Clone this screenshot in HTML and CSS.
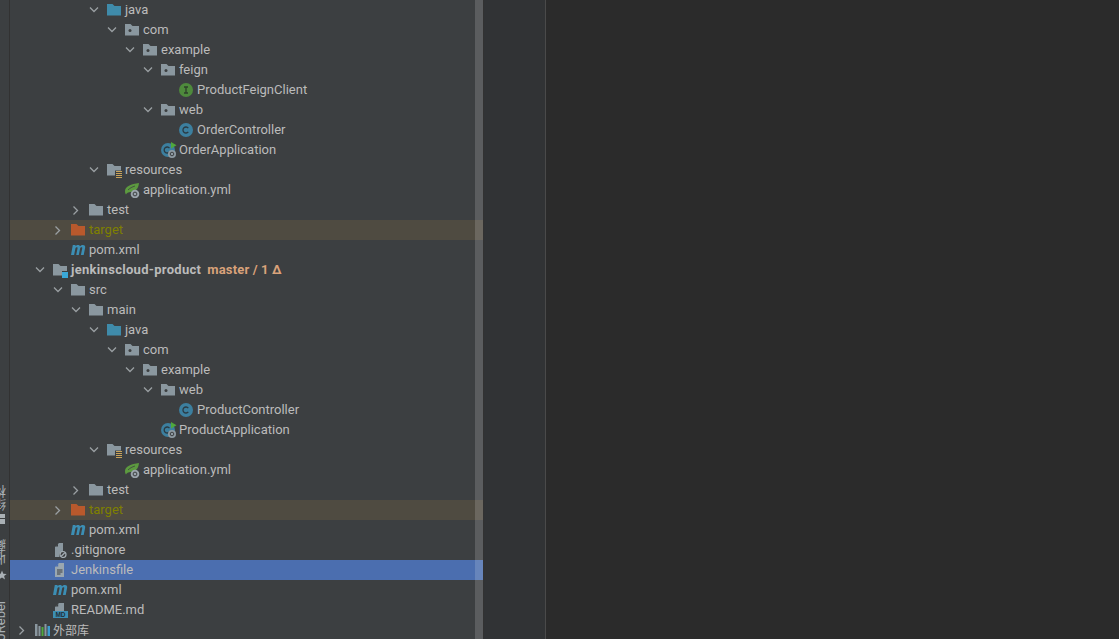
FILE: index.html
```html
<!DOCTYPE html>
<html lang="zh-CN">
<head>
    <meta charset="UTF-8">
    <meta name="viewport" content="width=device-width, initial-scale=1.0">
    <title>项目</title>
    <link rel="stylesheet" href="styles.css">
</head>
<body>
    <svg class="sprites" width="0" height="0" aria-hidden="true">
        <symbol id="i-arrow-down" viewBox="0 0 16 16"><path d="M5 5.500 9 9.500 13 5.500" fill="none" stroke="#9a9fa3" stroke-width="1.300"/></symbol>
        <symbol id="i-arrow-right" viewBox="0 0 16 16"><path d="M6.500 4.500 10.500 8.500 6.500 12.500" fill="none" stroke="#9a9fa3" stroke-width="1.300"/></symbol>
        <symbol id="i-folder" viewBox="0 0 16 16"><path d="M0 2h5.500L7.500 4H14v9.500H0z" fill="#8a979f"/></symbol>
        <symbol id="i-src" viewBox="0 0 16 16"><path d="M0 2h5.500L7.500 4H14v9.500H0z" fill="#3f8baa"/></symbol>
        <symbol id="i-target" viewBox="0 0 16 16"><path d="M0 2h5.500L7.500 4H14v9.500H0z" fill="#b9592c"/></symbol>
        <symbol id="i-package" viewBox="0 0 16 16"><path d="M0 2h5.500L7.500 4H14v9.500H0z" fill="#8a979f"/><circle cx="5" cy="8.500" r="1.500" fill="#3c3f41"/></symbol>
        <symbol id="i-resources" viewBox="0 0 16 16"><path d="M0 2h5.500L7.500 4H14v4.500H8v5H0z" fill="#8a979f"/><path d="M9 9.500h6M9 11.500h6M9 13.500h6M9 15.500h6" stroke="#c9a35a" stroke-width="1"/></symbol>
        <symbol id="i-module" viewBox="0 0 16 16"><path d="M0 2h5.500L7.500 4H14v5H9v4.500H0z" fill="#8a979f"/><rect x="9" y="10" width="6" height="6" fill="#3aa8d8"/></symbol>
        <symbol id="i-class" viewBox="0 0 16 16"><circle cx="7" cy="8" r="7" fill="#3c7f9f"/><path d="M9.300 6.100A3 3 0 1 0 9.300 9.900" fill="none" stroke="#2b3a42" stroke-width="1.300"/></symbol>
        <symbol id="i-interface" viewBox="0 0 16 16"><circle cx="7" cy="8" r="7" fill="#4e8a3c"/><path d="M5 5h4M5 11h4M7 5v6" fill="none" stroke="#2d3f2a" stroke-width="1.300"/></symbol>
        <symbol id="i-app" viewBox="0 0 16 16"><circle cx="7" cy="8" r="7" fill="#3c7f9f"/><path d="M8.500 6.100A3 3 0 1 0 8.500 9.900" fill="none" stroke="#2b3a42" stroke-width="1.300"/><path d="M10 0v6.500l5.500-3.200z" fill="#4fa83d"/><circle cx="11" cy="12" r="4" fill="#8e9aa2"/><circle cx="11" cy="12" r="1.800" fill="none" stroke="#3c3f41" stroke-width="1"/></symbol>
        <symbol id="i-yml" viewBox="0 0 16 16"><path d="M0 9C0 4.500 6 2 14 1 13.500 7 10 10 5.500 10 3.500 10 1.500 11 1 12.500 .300 11.500 0 10.500 0 9z" fill="#5c9a3f"/><path d="M3 8c2-2 4-3 7-4" fill="none" stroke="#3c3f41" stroke-width=".8"/><circle cx="10" cy="12" r="4.300" fill="#9aa4ab"/><circle cx="10" cy="12" r="1.900" fill="none" stroke="#3c3f41" stroke-width="1"/></symbol>
        <symbol id="i-maven" viewBox="0 0 16 16"><path d="M0 13 1.800 3H4.600L4.400 4.100C5.200 3.200 6.200 2.900 7 2.900 8 2.900 8.800 3.400 9 4.300 9.900 3.300 10.900 2.900 11.900 2.900 13.700 2.900 14.500 4 14.100 5.900L12.700 13H9.900L11.200 6.500C11.400 5.700 11.100 5.200 10.500 5.200 9.900 5.200 9.300 5.700 9.100 6.500L7.800 13H5.200L6.500 6.500C6.700 5.700 6.400 5.200 5.800 5.200 5.200 5.200 4.600 5.700 4.400 6.500L3.100 13z" fill="#3c8eb4"/></symbol>
        <symbol id="i-ignore" viewBox="0 0 16 16"><path d="M6 1h4v8.500A4 4 0 0 0 6.500 15H2V5z" fill="#8a979f"/><path d="M5 1.500V4.500H2.200z" fill="#3c3f41"/><circle cx="10" cy="12.500" r="3" fill="none" stroke="#a4adb3" stroke-width="1.200"/><path d="M8 14.500 12 10.500" stroke="#a4adb3" stroke-width="1.200"/></symbol>
        <symbol id="i-file" viewBox="0 0 16 16"><path d="M6 1h5v14H2V5z" fill="#9aa7b0"/><path d="M5.200 1.500V4.500H2.200z" fill="#4b6eaf"/><path d="M4 8h5.500M4 10h5.500M4 12h3.500" stroke="#3c3f41" stroke-width="1"/></symbol>
        <symbol id="i-library" viewBox="0 0 16 16"><path d="M0 2h2.500v12H0zM3.500 4h2v10h-2zM9.500 2h2v12h-2z" fill="#8a979f"/><path d="M6.500 5h2v9h-2z" fill="#4fa83d"/><path d="M12.500 4h2.500v10h-2.500z" fill="#3c9ccf"/></symbol>
        <symbol id="i-star" viewBox="0 0 10 10"><path d="M5 .500 6.300 3.700 9.700 3.900 7.100 6.100 8 9.500 5 7.600 2 9.500 2.900 6.100 .300 3.900 3.700 3.700z" fill="#a9b0b5"/></symbol>
    </svg>

    <div class="app">
        <aside class="side-strip">
            <span class="side-label side-label-structure">结构</span>
            <span class="side-mark"></span>
            <span class="side-label side-label-fav">收藏</span>
            <svg class="side-star"><use href="#i-star"/></svg>
            <span class="side-label side-label-rebel">JRebel</span>
        </aside>

        <section class="project-pane">
            <div class="tree">
                <div class="row lv-4"><svg class="arrow"><use href="#i-arrow-down"/></svg><svg class="icon"><use href="#i-src"/></svg><span class="name">java</span></div>
                <div class="row lv-5"><svg class="arrow"><use href="#i-arrow-down"/></svg><svg class="icon"><use href="#i-package"/></svg><span class="name">com</span></div>
                <div class="row lv-6"><svg class="arrow"><use href="#i-arrow-down"/></svg><svg class="icon"><use href="#i-package"/></svg><span class="name">example</span></div>
                <div class="row lv-7"><svg class="arrow"><use href="#i-arrow-down"/></svg><svg class="icon"><use href="#i-package"/></svg><span class="name">feign</span></div>
                <div class="row lv-8"><span class="arrow"></span><svg class="icon"><use href="#i-interface"/></svg><span class="name">ProductFeignClient</span></div>
                <div class="row lv-7"><svg class="arrow"><use href="#i-arrow-down"/></svg><svg class="icon"><use href="#i-package"/></svg><span class="name">web</span></div>
                <div class="row lv-8"><span class="arrow"></span><svg class="icon"><use href="#i-class"/></svg><span class="name">OrderController</span></div>
                <div class="row lv-7"><span class="arrow"></span><svg class="icon"><use href="#i-app"/></svg><span class="name">OrderApplication</span></div>
                <div class="row lv-4"><svg class="arrow"><use href="#i-arrow-down"/></svg><svg class="icon"><use href="#i-resources"/></svg><span class="name">resources</span></div>
                <div class="row lv-5"><span class="arrow"></span><svg class="icon"><use href="#i-yml"/></svg><span class="name">application.yml</span></div>
                <div class="row lv-3"><svg class="arrow"><use href="#i-arrow-right"/></svg><svg class="icon"><use href="#i-folder"/></svg><span class="name">test</span></div>
                <div class="row lv-2 excluded"><svg class="arrow"><use href="#i-arrow-right"/></svg><svg class="icon"><use href="#i-target"/></svg><span class="name">target</span></div>
                <div class="row lv-2"><span class="arrow"></span><svg class="icon"><use href="#i-maven"/></svg><span class="name">pom.xml</span></div>
                <div class="row lv-1"><svg class="arrow"><use href="#i-arrow-down"/></svg><svg class="icon"><use href="#i-module"/></svg><span class="name bold">jenkinscloud-product</span><span class="branch">master / 1 Δ</span></div>
                <div class="row lv-2"><svg class="arrow"><use href="#i-arrow-down"/></svg><svg class="icon"><use href="#i-folder"/></svg><span class="name">src</span></div>
                <div class="row lv-3"><svg class="arrow"><use href="#i-arrow-down"/></svg><svg class="icon"><use href="#i-folder"/></svg><span class="name">main</span></div>
                <div class="row lv-4"><svg class="arrow"><use href="#i-arrow-down"/></svg><svg class="icon"><use href="#i-src"/></svg><span class="name">java</span></div>
                <div class="row lv-5"><svg class="arrow"><use href="#i-arrow-down"/></svg><svg class="icon"><use href="#i-package"/></svg><span class="name">com</span></div>
                <div class="row lv-6"><svg class="arrow"><use href="#i-arrow-down"/></svg><svg class="icon"><use href="#i-package"/></svg><span class="name">example</span></div>
                <div class="row lv-7"><svg class="arrow"><use href="#i-arrow-down"/></svg><svg class="icon"><use href="#i-package"/></svg><span class="name">web</span></div>
                <div class="row lv-8"><span class="arrow"></span><svg class="icon"><use href="#i-class"/></svg><span class="name">ProductController</span></div>
                <div class="row lv-7"><span class="arrow"></span><svg class="icon"><use href="#i-app"/></svg><span class="name">ProductApplication</span></div>
                <div class="row lv-4"><svg class="arrow"><use href="#i-arrow-down"/></svg><svg class="icon"><use href="#i-resources"/></svg><span class="name">resources</span></div>
                <div class="row lv-5"><span class="arrow"></span><svg class="icon"><use href="#i-yml"/></svg><span class="name">application.yml</span></div>
                <div class="row lv-3"><svg class="arrow"><use href="#i-arrow-right"/></svg><svg class="icon"><use href="#i-folder"/></svg><span class="name">test</span></div>
                <div class="row lv-2 excluded"><svg class="arrow"><use href="#i-arrow-right"/></svg><svg class="icon"><use href="#i-target"/></svg><span class="name">target</span></div>
                <div class="row lv-2"><span class="arrow"></span><svg class="icon"><use href="#i-maven"/></svg><span class="name">pom.xml</span></div>
                <div class="row lv-1"><span class="arrow"></span><svg class="icon"><use href="#i-ignore"/></svg><span class="name">.gitignore</span></div>
                <div class="row lv-1 selected"><span class="arrow"></span><svg class="icon"><use href="#i-file"/></svg><span class="name">Jenkinsfile</span></div>
                <div class="row lv-1"><span class="arrow"></span><svg class="icon"><use href="#i-maven"/></svg><span class="name">pom.xml</span></div>
                <div class="row lv-1"><span class="arrow"></span><svg class="icon" viewBox="0 0 16 16"><path d="M6 1h5v8H2V5z" fill="#8a979f"/><path d="M5.200 1.500V4.500H2.200z" fill="#3c3f41"/><rect x="0" y="9" width="15" height="7" fill="#3c8eb4"/><text x="7.500" y="15" text-anchor="middle" class="md-text">MD</text></svg><span class="name">README.md</span></div>
                <div class="row lv-0"><svg class="arrow"><use href="#i-arrow-right"/></svg><svg class="icon"><use href="#i-library"/></svg><span class="name cjk">外部库</span></div>
            </div>
            <div class="scrollbar"></div>
        </section>

        <div class="gutter"></div>
        <main class="editor"></main>
    </div>
</body>
</html>
```

FILE: styles.css
```css
* {
    box-sizing: border-box;
}
html, body {
    margin: 0;
    height: 100%;
    overflow: hidden;
}
body {
    font-family: Roboto, "Noto Sans CJK SC", sans-serif;
    font-size: 13px;
    color: #bbbbbb;
    background-color: #2b2b2b;
}
.sprites {
    position: absolute;
}
.md-text {
    font-family: "Liberation Sans", sans-serif;
    font-size: 6.500px;
    font-weight: 700;
    fill: #22303a;
}
.app {
    display: flex;
    height: 639px;
}
.side-strip {
    flex: 0 0 10px;
    position: relative;
    overflow: hidden;
    background-color: #3c3f41;
    border-right: 1px solid #323232;
}
.side-label {
    position: absolute;
    left: -6px;
    font-size: 13px;
    line-height: 13px;
    color: #a9b0b5;
    writing-mode: vertical-rl;
    transform: rotate(180deg);
}
.side-label-structure {
    top: 485px;
}
.side-label-fav {
    top: 539px;
}
.side-label-rebel {
    top: 601px;
}
.side-mark {
    position: absolute;
    left: 0;
    top: 514px;
    width: 5px;
    height: 10px;
    background: linear-gradient(#a9b0b5 0 4px, transparent 4px 5px, #a9b0b5 5px);
}
.side-star {
    position: absolute;
    left: -3px;
    top: 570px;
    width: 10px;
    height: 10px;
}
.project-pane {
    flex: 0 0 474px;
    position: relative;
    overflow: hidden;
    background-color: #3c3f41;
    border-right: 1px solid #323232;
}
.tree {
    display: flex;
    flex-direction: column;
}
.row {
    display: flex;
    align-items: center;
    flex: 0 0 20px;
    height: 20px;
    white-space: nowrap;
}
.name {
    position: relative;
    top: -1px;
}
.cjk {
    font-size: 12px;
}
.lv-0 { padding-left: 3px; }
.lv-1 { padding-left: 21px; }
.lv-2 { padding-left: 39px; }
.lv-3 { padding-left: 57px; }
.lv-4 { padding-left: 75px; }
.lv-5 { padding-left: 93px; }
.lv-6 { padding-left: 111px; }
.lv-7 { padding-left: 129px; }
.lv-8 { padding-left: 147px; }
.arrow {
    flex: 0 0 16px;
    width: 16px;
    height: 16px;
    margin-right: 6px;
}
.icon {
    flex: 0 0 16px;
    width: 16px;
    height: 16px;
    margin-right: 2px;
}
.bold {
    font-weight: 700;
    letter-spacing: 0.3px;
}
.branch {
    position: relative;
    top: -1px;
    margin-left: 6px;
    font-weight: 700;
    letter-spacing: 0.15px;
    color: #d9a27a;
}
.excluded {
    background-color: #4f4b41;
}
.excluded .name {
    color: #7f8000;
}
.selected {
    background-color: #4b6eaf;
}
.scrollbar {
    position: absolute;
    top: 0;
    right: 0;
    width: 8px;
    height: 100%;
    background-color: rgba(255, 255, 255, 0.16);
}
.gutter {
    flex: 0 0 62px;
    background-color: #313335;
    border-right: 1px solid #4a4a4a;
}
.editor {
    flex: 1;
    background-color: #2b2b2b;
}
```
